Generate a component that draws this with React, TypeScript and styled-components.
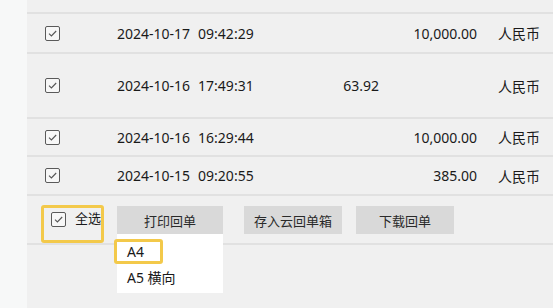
import React from 'react';
import styled, { createGlobalStyle } from 'styled-components';

const GlobalStyle = createGlobalStyle`
  html, body {
    margin: 0;
    padding: 0;
    background: #f0f0f0;
    font-family: "Noto Sans", "Noto Sans CJK SC", sans-serif;
    color: #1a1a1a;
  }
  * { box-sizing: border-box; }
`;

const Page = styled.div`
  display: flex;
  width: 553px;
  height: 308px;
  overflow: hidden;
`;

const Side = styled.div`
  width: 27px;
  flex: none;
  background: #f7f8f8;
`;

const Panel = styled.div`
  flex: 1;
  background: #f0f0f0;
  display: flex;
  flex-direction: column;
`;

const TopGap = styled.div`
  height: 12px;
`;

const Row = styled.div<{ $h: number }>`
  height: ${(p) => p.$h}px;
  border-top: 2px solid #e1e1e1;
  display: grid;
  grid-template-columns: 90px 170px 92px 98px 1fr;
  align-items: center;
  font-size: 14px;
`;

const CheckCell = styled.div`
  padding-left: 18px;
  display: flex;
  align-items: center;
`;

const Box = styled.span`
  width: 15px;
  height: 15px;
  border: 1.3px solid #5a5a5a;
  border-radius: 2px;
  display: inline-flex;
  align-items: center;
  justify-content: center;
  background: #f7f7f7;
`;

const DateCell = styled.div`
  white-space: nowrap;
`;

const Time = styled.span`
  margin-left: 8px;
`;

const Num = styled.div`
  text-align: right;
  white-space: nowrap;
`;

const Currency = styled.div`
  padding-left: 21px;
  white-space: nowrap;
`;

const Footer = styled.div`
  height: 51px;
  border-top: 2px solid #e1e1e1;
  border-bottom: 2px solid #e1e1e1;
  display: flex;
  align-items: flex-start;
  padding-top: 9px;
  padding-left: 14px;
`;

const SelectAll = styled.div`
  width: 63px;
  height: 38px;
  border: 3px solid #f3c94a;
  border-radius: 3px;
  display: flex;
  align-items: flex-start;
  padding: 4px 0 0 7px;
  font-size: 13px;
  gap: 9px;
  white-space: nowrap;
  overflow: hidden;
`;

const SelectLabel = styled.span`
  line-height: 15px;
  margin-top: -1px;
`;

const BtnWrap = styled.div<{ $ml: number }>`
  position: relative;
  margin-left: ${(p) => p.$ml}px;
  margin-top: 1px;
`;

const Button = styled.div<{ $w: number }>`
  width: ${(p) => p.$w}px;
  height: 28px;
  background: #d9d9d9;
  display: flex;
  align-items: center;
  justify-content: center;
  font-size: 13px;
  color: #2a2a2a;
`;

const Menu = styled.div`
  position: absolute;
  top: 28px;
  left: 0;
  width: 106px;
  height: 59px;
  background: #ffffff;
  padding-top: 5px;
  z-index: 2;
`;

const MenuItem = styled.div<{ $active?: boolean }>`
  height: 25px;
  display: flex;
  align-items: center;
  font-size: 14px;
  padding-left: 10px;
  white-space: nowrap;
  ${(p) =>
    p.$active &&
    `
    width: 49px;
    margin-left: -3px;
    border: 3px solid #f3c94a;
    border-radius: 3px;
  `}
`;

const Check = () => (
  <Box>
    <svg width="11" height="11" viewBox="0 0 11 11">
      <path d="M2 5.6 L4.4 8 L9.2 3" fill="none" stroke="#555" strokeWidth="1.1" />
    </svg>
  </Box>
);

const rows = [
  { h: 40, date: '2024-10-17', time: '09:42:29', a: '', b: '10,000.00' },
  { h: 65, date: '2024-10-16', time: '17:49:31', a: '63.92', b: '' },
  { h: 38, date: '2024-10-16', time: '16:29:44', a: '', b: '10,000.00' },
  { h: 39, date: '2024-10-15', time: '09:20:55', a: '', b: '385.00' },
];

export default function App() {
  return (
    <>
      <GlobalStyle />
      <Page>
        <Side />
        <Panel>
          <TopGap />
          {rows.map((r, i) => (
            <Row key={i} $h={r.h}>
              <CheckCell>
                <Check />
              </CheckCell>
              <DateCell>
                {r.date}
                <Time>{r.time}</Time>
              </DateCell>
              <Num>{r.a}</Num>
              <Num>{r.b}</Num>
              <Currency>人民币</Currency>
            </Row>
          ))}
          <Footer>
            <SelectAll>
              <Check />
              <SelectLabel>全选</SelectLabel>
            </SelectAll>
            <BtnWrap $ml={13}>
              <Button $w={106}>打印回单</Button>
              <Menu>
                <MenuItem $active>A4</MenuItem>
                <MenuItem>A5 横向</MenuItem>
              </Menu>
            </BtnWrap>
            <BtnWrap $ml={21}>
              <Button $w={98}>存入云回单箱</Button>
            </BtnWrap>
            <BtnWrap $ml={14}>
              <Button $w={98}>下载回单</Button>
            </BtnWrap>
          </Footer>
        </Panel>
      </Page>
    </>
  );
}
